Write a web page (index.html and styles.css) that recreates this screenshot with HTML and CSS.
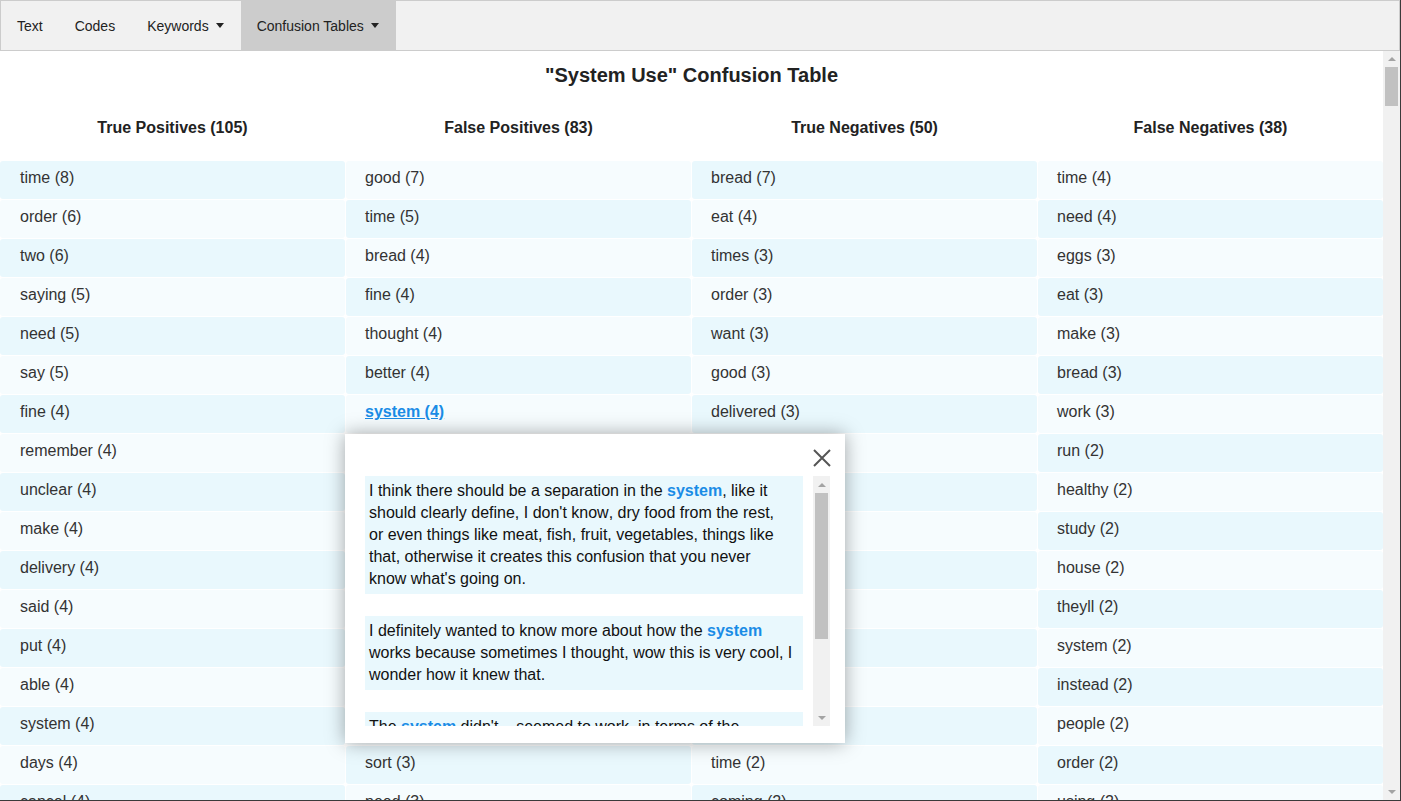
FILE: index.html
```html
<!DOCTYPE html>
<html lang="en">
<head>
<meta charset="utf-8">
<title>Confusion Tables</title>
<link rel="stylesheet" href="styles.css">
</head>
<body>
<div class="app">
  <nav class="nav">
    <div class="nav-item">Text</div>
    <div class="nav-item">Codes</div>
    <div class="nav-item">Keywords<span class="caret"></span></div>
    <div class="nav-item active">Confusion Tables<span class="caret"></span></div>
  </nav>
  <div class="main">
    <main class="content">
      <h1 class="title">"System Use" Confusion Table</h1>
      <div class="heads">
        <div class="head">True Positives (105)</div>
        <div class="head">False Positives (83)</div>
        <div class="head">True Negatives (50)</div>
        <div class="head">False Negatives (38)</div>
      </div>
      <div class="table">
        <div class="col">
          <div class="cell">time (8)</div>
          <div class="cell">order (6)</div>
          <div class="cell">two (6)</div>
          <div class="cell">saying (5)</div>
          <div class="cell">need (5)</div>
          <div class="cell">say (5)</div>
          <div class="cell">fine (4)</div>
          <div class="cell">remember (4)</div>
          <div class="cell">unclear (4)</div>
          <div class="cell">make (4)</div>
          <div class="cell">delivery (4)</div>
          <div class="cell">said (4)</div>
          <div class="cell">put (4)</div>
          <div class="cell">able (4)</div>
          <div class="cell">system (4)</div>
          <div class="cell">days (4)</div>
          <div class="cell">cancel (4)</div>
          <div class="cell">get (3)</div>
        </div>
        <div class="col">
          <div class="cell">good (7)</div>
          <div class="cell">time (5)</div>
          <div class="cell">bread (4)</div>
          <div class="cell">fine (4)</div>
          <div class="cell">thought (4)</div>
          <div class="cell">better (4)</div>
          <div class="cell"><a class="kw" href="#">system (4)</a></div>
          <div class="cell">know (3)</div>
          <div class="cell">eggs (3)</div>
          <div class="cell">really (3)</div>
          <div class="cell">think (3)</div>
          <div class="cell">want (3)</div>
          <div class="cell">milk (3)</div>
          <div class="cell">going (3)</div>
          <div class="cell">things (3)</div>
          <div class="cell">sort (3)</div>
          <div class="cell">need (3)</div>
          <div class="cell">right (3)</div>
        </div>
        <div class="col">
          <div class="cell">bread (7)</div>
          <div class="cell">eat (4)</div>
          <div class="cell">times (3)</div>
          <div class="cell">order (3)</div>
          <div class="cell">want (3)</div>
          <div class="cell">good (3)</div>
          <div class="cell">delivered (3)</div>
          <div class="cell">food (3)</div>
          <div class="cell">get (2)</div>
          <div class="cell">go (2)</div>
          <div class="cell">day (2)</div>
          <div class="cell">week (2)</div>
          <div class="cell">cook (2)</div>
          <div class="cell">buy (2)</div>
          <div class="cell">fresh (2)</div>
          <div class="cell">time (2)</div>
          <div class="cell">coming (2)</div>
          <div class="cell">lot (2)</div>
        </div>
        <div class="col">
          <div class="cell">time (4)</div>
          <div class="cell">need (4)</div>
          <div class="cell">eggs (3)</div>
          <div class="cell">eat (3)</div>
          <div class="cell">make (3)</div>
          <div class="cell">bread (3)</div>
          <div class="cell">work (3)</div>
          <div class="cell">run (2)</div>
          <div class="cell">healthy (2)</div>
          <div class="cell">study (2)</div>
          <div class="cell">house (2)</div>
          <div class="cell">theyll (2)</div>
          <div class="cell">system (2)</div>
          <div class="cell">instead (2)</div>
          <div class="cell">people (2)</div>
          <div class="cell">order (2)</div>
          <div class="cell">using (2)</div>
          <div class="cell">food (2)</div>
        </div>
      </div>
    </main>
    <div class="vscroll vscroll-page" aria-hidden="true">
      <div class="sb-btn"><span class="arrow-up"></span></div>
      <div class="sb-track"><div class="sb-thumb"></div></div>
      <div class="sb-btn"><span class="arrow-down"></span></div>
    </div>
  </div>

  <div class="modal">
    <button class="close" type="button" aria-label="Close">
      <svg width="18" height="18" viewBox="0 0 18 18"><path d="M1 1 L17 17 M17 1 L1 17" stroke="#555" stroke-width="2" fill="none"/></svg>
    </button>
    <div class="modal-body">
      <div class="modal-text">
        <p class="quote">I think there should be a separation in the <b class="hl">system</b>, like it should clearly define, I don't know, dry food from the rest, or even things like meat, fish, fruit, vegetables, things like that, otherwise it creates this confusion that you never know what's going on.</p>
        <p class="quote">I definitely wanted to know more about how the <b class="hl">system</b> works because sometimes I thought, wow this is very cool, I wonder how it knew that.</p>
        <p class="quote">The <b class="hl">system</b> didn't... seemed to work, in terms of the recommendations, but sometimes it just felt a bit random and I wasn't sure why it picked those things for me.</p>
      </div>
      <div class="vscroll vscroll-modal" aria-hidden="true">
        <div class="sb-btn"><span class="arrow-up"></span></div>
        <div class="sb-track"><div class="sb-thumb"></div></div>
        <div class="sb-btn"><span class="arrow-down"></span></div>
      </div>
    </div>
  </div>
</div>
</body>
</html>
```

FILE: styles.css
```css
* {
  box-sizing: border-box;
}

html,
body {
  margin: 0;
  height: 100%;
}

body {
  background: #3a3a3a;
  font-family: "Liberation Sans", Arial, sans-serif;
  overflow: hidden;
}

.app {
  position: relative;
  width: 1400px;
  height: 800px;
  background: #fff;
  display: flex;
  flex-direction: column;
}

/* ---------- navigation ---------- */
.nav {
  flex: none;
  height: 51px;
  display: flex;
  background: #f1f1f1;
  border: 1px solid #ccc;
}

.nav-item {
  display: flex;
  align-items: center;
  padding: 0 16px;
  font-size: 14px;
  color: #222;
}

.nav-item.active {
  background: #ccc;
}

.caret {
  width: 0;
  height: 0;
  margin-left: 7px;
  margin-right: 1px;
  border-left: 4px solid transparent;
  border-right: 4px solid transparent;
  border-top: 5px solid #222;
}

/* ---------- content ---------- */
.main {
  flex: 1;
  min-height: 0;
  display: flex;
}

.content {
  flex: 1;
  min-width: 0;
  overflow: hidden;
}

.title {
  margin: 0;
  padding-top: 12px;
  font-size: 20px;
  line-height: 24px;
  font-weight: bold;
  text-align: center;
  color: #222;
}

.heads {
  display: grid;
  grid-template-columns: repeat(4, 1fr);
  column-gap: 1px;
  padding: 30px 0 22px;
}

.head {
  text-align: center;
  font-size: 16px;
  line-height: 22px;
  font-weight: bold;
  color: #222;
}

.table {
  display: grid;
  grid-template-columns: repeat(4, 1fr);
  column-gap: 1px;
  align-items: start;
}

.col {
  display: flex;
  flex-direction: column;
  gap: 1px;
}

.cell {
  height: 38px;
  padding: 7px 19px 0;
  font-size: 16px;
  line-height: 20px;
  color: #333;
  background: #f6fcfe;
  border-radius: 3px;
  white-space: nowrap;
}

.col:first-child .cell {
  padding-left: 20px;
}

.col:nth-child(odd) .cell:nth-child(odd),
.col:nth-child(even) .cell:nth-child(even) {
  background: #e9f8fd;
}

.kw {
  color: #1a8ce6;
  font-weight: bold;
  text-decoration: underline;
}

/* ---------- scrollbars (drawn) ---------- */
.vscroll {
  flex: none;
  width: 17px;
  display: flex;
  flex-direction: column;
  background: #f1f1f1;
}

.sb-btn {
  flex: none;
  height: 17px;
  display: flex;
  align-items: center;
  justify-content: center;
}

.vscroll-page .sb-btn {
  height: 16px;
}

.sb-track {
  flex: 1;
  min-height: 0;
}

.sb-thumb {
  margin: 0 2px;
  background: #c1c1c1;
}

.vscroll-page .sb-thumb {
  height: 39px;
}

.vscroll-modal .sb-thumb {
  height: 146px;
}

.arrow-up,
.arrow-down {
  width: 0;
  height: 0;
  border-left: 4px solid transparent;
  border-right: 4px solid transparent;
}

.arrow-up {
  border-bottom: 4px solid #a3a3a3;
}

.arrow-down {
  border-top: 4px solid #a3a3a3;
}

/* ---------- modal ---------- */
.modal {
  position: absolute;
  left: 345px;
  top: 434px;
  width: 500px;
  height: 309px;
  padding: 42px 15px 17px 20px;
  background: #fff;
  box-shadow: 0 0 18px rgba(0, 0, 0, 0.35);
}

.close {
  position: absolute;
  top: 15px;
  right: 14px;
  width: 18px;
  height: 18px;
  padding: 0;
  border: 0;
  background: none;
  display: block;
}

.close svg {
  display: block;
}

.modal-body {
  height: 250px;
  display: flex;
}

.modal-text {
  flex: 1;
  min-width: 0;
  overflow: hidden;
}

.quote {
  margin: 0 10px 22px 0;
  padding: 4px 10.72px 4px 4px;
  background: #e9f8fd;
  font-size: 16px;
  line-height: 22px;
  font-kerning: none;
  color: #111;
}

.hl {
  color: #1a8ce6;
}
```
